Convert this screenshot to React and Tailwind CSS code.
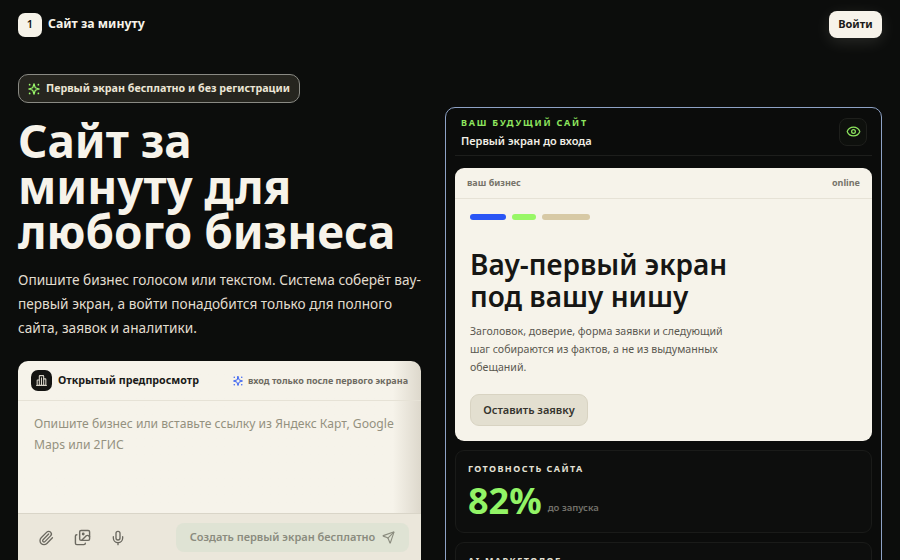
import { Paperclip, Images, Mic, Send, Eye } from 'lucide-react'

function SparkIcon({ size, className }) {
  return (
    <svg width={size} height={size} viewBox="0 0 24 24" fill="none" stroke="currentColor" strokeWidth="2" strokeLinecap="round" strokeLinejoin="round" className={className}>
      <path d="M12 3l2.2 6.8L21 12l-6.8 2.2L12 21l-2.2-6.8L3 12l6.8-2.2z" />
      <path d="M4.5 4.5h.01M19.5 4.5h.01M4.5 19.5h.01M19.5 19.5h.01" strokeWidth="3" />
    </svg>
  )
}

function TowerIcon({ size, className }) {
  return (
    <svg width={size} height={size} viewBox="0 0 24 24" fill="none" stroke="currentColor" strokeWidth="2" strokeLinecap="round" strokeLinejoin="round" className={className}>
      <path d="M8 21V4a1 1 0 0 1 1-1h6a1 1 0 0 1 1 1v17" />
      <path d="M8 11H5a1 1 0 0 0-1 1v9M16 9h3a1 1 0 0 1 1 1v11M3 21h18M12 7v14" />
    </svg>
  )
}

function LeftColumn() {
  return (
    <div className="flex w-[403px] flex-shrink-0 flex-col items-start pt-[36px]">
      <div className="flex h-[29px] w-[282px] items-center gap-[5px] rounded-[10px] border border-[#8a8a84] bg-[#26251f] px-[8px]">
        <SparkIcon size={14} className="flex-shrink-0 text-[#9dfc6c]" />
        <span className="text-[10.7px] font-bold whitespace-nowrap text-[#ece6d6]">Первый экран бесплатно и без регистрации</span>
      </div>
      <h1 className="mt-[15px] text-[45.8px] leading-[45.5px] font-bold text-[#f7f3ea]">
        Сайт за
        <br />
        минуту для
        <br />
        любого бизнеса
      </h1>
      <p className="mt-[13.5px] w-[408px] text-[13.65px] leading-[24px] text-[#e2ddd0]">
        Опишите бизнес голосом или текстом. Система соберёт вау-первый экран, а войти понадобится только для полного
        сайта, заявок и аналитики.
      </p>
      <div className="mt-[21px] w-full overflow-hidden rounded-t-[10px] bg-gradient-to-r from-[#f6f3ea] from-93% to-[#ddd8cc]">
        <div className="flex h-[40px] items-center justify-between border-b border-[#e6e2d6] px-[13px]">
          <div className="flex items-center gap-[6px]">
            <span className="flex h-[21px] w-[21px] items-center justify-center rounded-[7px] bg-[#141412]">
              <TowerIcon size={13} className="text-[#d8d4c8]" />
            </span>
            <span className="text-[10.7px] font-bold text-[#1a1a18]">Открытый предпросмотр</span>
          </div>
          <div className="flex items-center gap-[4px]">
            <SparkIcon size={12} className="text-[#3b62f0]" />
            <span className="text-[9px] font-bold text-[#6e6b62]">вход только после первого экрана</span>
          </div>
        </div>
        <div className="h-[112px] px-[16px] pt-[12px] text-[12.15px] leading-[21px] text-[#94917f]">
          Опишите бизнес или вставьте ссылку из Яндекс Карт, Google Maps или 2ГИС
        </div>
        <div className="flex h-[60px] items-start justify-between border-t border-[#d9d5c8] bg-[#ebe7db] pt-[9px] pr-[12px] pl-[20px]">
          <div className="flex h-[29px] items-center gap-[19.5px] text-[#6b6960]">
            <Paperclip size={16} />
            <Images size={17} />
            <Mic size={16} />
          </div>
          <div className="flex h-[29px] w-[233px] items-center justify-center gap-[7px] rounded-[8px] bg-[#dfe3d4] text-[#8a8b7e]">
            <span className="text-[11px] font-semibold">Создать первый экран бесплатно</span>
            <Send size={13} />
          </div>
        </div>
      </div>
    </div>
  )
}

function PreviewCard() {
  return (
    <div className="mt-[69px] h-[600px] w-[437px] flex-shrink-0 rounded-[10px] border border-[#8ea2c6] bg-[#0b0c0b] px-[9px]">
      <div className="flex h-[48px] items-center justify-between border-b border-[#1d1e1c] pr-[5px] pl-[6px]">
        <div>
          <div className="text-[9px] leading-[13px] font-bold tracking-[0.2em] text-[#8ee65f]">ВАШ БУДУЩИЙ САЙТ</div>
          <div className="mt-[4px] text-[11px] leading-[15px] font-semibold text-[#f2efe6]">Первый экран до входа</div>
        </div>
        <span className="flex h-[28px] w-[28px] items-center justify-center rounded-[8px] border border-[#1e1f1c] bg-[#0e100d]">
          <Eye size={15} className="text-[#8ee65f]" />
        </span>
      </div>
      <div className="mt-[12px] h-[273px] rounded-[9px] bg-[#f6f3ea]">
        <div className="flex h-[31px] items-center justify-between border-b border-[#e6e2d6] px-[12px] text-[9px] font-bold text-[#77746a]">
          <span>ваш бизнес</span>
          <span>online</span>
        </div>
        <div className="px-[15px]">
          <div className="mt-[15px] flex gap-[6px]">
            <span className="h-[6px] w-[36px] rounded-full bg-[#2a55f5]" />
            <span className="h-[6px] w-[24px] rounded-full bg-[#98f766]" />
            <span className="h-[6px] w-[48px] rounded-full bg-[#d7c9a5]" />
          </div>
          <h2 className="mt-[28px] text-[28px] leading-[32px] font-semibold text-[#161614]">
            Вау-первый экран
            <br />
            под вашу нишу
          </h2>
          <p className="mt-[10px] w-[270px] text-[10.6px] leading-[18px] text-[#5a5850]">
            Заголовок, доверие, форма заявки и следующий шаг собираются из фактов, а не из выдуманных обещаний.
          </p>
          <div className="mt-[18px] flex h-[32px] w-[118px] items-center justify-center rounded-[9px] border border-[#d8d3c2] bg-[#e3dfd0] text-[11px] font-semibold text-[#35342e]">
            Оставить заявку
          </div>
        </div>
      </div>
      <div className="mt-[9px] h-[83px] rounded-[9px] border border-[#1a1b19] bg-[#0d0e0d] px-[12px] pt-[11px]">
        <div className="text-[9px] leading-[13px] font-bold tracking-[0.16em] text-[#e4e1d6]">ГОТОВНОСТЬ САЙТА</div>
        <div className="mt-[4px] flex items-end gap-[6px]">
          <span className="text-[36px] leading-[44px] font-bold text-[#92f466]">82%</span>
          <span className="pb-[9px] text-[9.5px] leading-[13px] font-semibold text-[#72716a]">до запуска</span>
        </div>
      </div>
      <div className="mt-[9px] h-[83px] rounded-[9px] border border-[#1a1b19] bg-[#0d0e0d] px-[12px] pt-[11px]">
        <div className="text-[9px] leading-[13px] font-bold tracking-[0.16em] text-[#e4e1d6]">AI-МАРКЕТОЛОГ</div>
      </div>
    </div>
  )
}

export default function App() {
  return (
    <div className="h-[560px] w-[900px] overflow-hidden bg-[#0c0d0c] font-['Noto_Sans',sans-serif]">
      <header className="flex items-center justify-between pt-[11px] pr-[18px] pl-[18px]">
        <div className="flex items-center gap-[6px]">
          <span className="flex h-[24px] w-[24px] items-center justify-center rounded-[7px] bg-[#f7f3ea] text-[11px] font-semibold text-[#161614]">
            1
          </span>
          <span className="text-[12.3px] font-bold text-[#f7f3ea]">Сайт за минуту</span>
        </div>
        <div className="flex h-[27px] w-[53px] items-center justify-center rounded-[8px] bg-[#f7f3ea] text-[11px] font-bold text-[#1a1a18] shadow-[0_4px_16px_rgba(247,243,234,0.12)]">
          Войти
        </div>
      </header>
      <main className="flex gap-[24px] pl-[18px]">
        <LeftColumn />
        <PreviewCard />
      </main>
    </div>
  )
}
